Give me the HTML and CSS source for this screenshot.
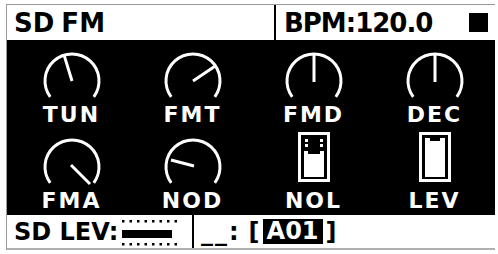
FILE: index.html
```html
<!DOCTYPE html>
<html>
<head>
<meta charset="utf-8">
<link rel="stylesheet" href="styles.css">
</head>
<body>
<div class="screen">
  <div class="hdr">
    <div class="title"><span class="sd">SD</span> FM</div>
    <div class="bpm"><span class="bpmtxt">BPM:120.0</span><span class="stop"></span></div>
  </div>
  <div class="main">
    <div class="cell">
      <svg class="icon" width="64" height="58" viewBox="0 0 64 58"><path class="arc" d="M10.2 50.9 A27 27 0 1 1 53.8 50.9"/><line class="ptr" x1="32" y1="35" x2="24.4" y2="10.1"/></svg>
      <div class="lbl">TUN</div>
    </div>
    <div class="cell">
      <svg class="icon" width="64" height="58" viewBox="0 0 64 58"><path class="arc" d="M10.2 50.9 A27 27 0 1 1 53.8 50.9"/><line class="ptr" x1="32" y1="35" x2="53.5" y2="20.5"/></svg>
      <div class="lbl">FMT</div>
    </div>
    <div class="cell">
      <svg class="icon" width="64" height="58" viewBox="0 0 64 58"><path class="arc" d="M10.2 50.9 A27 27 0 1 1 53.8 50.9"/><line class="ptr" x1="32" y1="36" x2="32" y2="8"/></svg>
      <div class="lbl">FMD</div>
    </div>
    <div class="cell">
      <svg class="icon" width="64" height="58" viewBox="0 0 64 58"><path class="arc" d="M10.2 50.9 A27 27 0 1 1 53.8 50.9"/><line class="ptr" x1="32" y1="36" x2="32" y2="8"/></svg>
      <div class="lbl">DEC</div>
    </div>
    <div class="cell">
      <svg class="icon" width="64" height="58" viewBox="0 0 64 58"><path class="arc" d="M10.2 50.9 A27 27 0 1 1 53.8 50.9"/><line class="ptr" x1="31" y1="33" x2="50" y2="52"/></svg>
      <div class="lbl">FMA</div>
    </div>
    <div class="cell">
      <svg class="icon" width="64" height="58" viewBox="0 0 64 58"><path class="arc" d="M10.2 50.9 A27 27 0 1 1 53.8 50.9"/><line class="ptr" x1="33" y1="34" x2="10" y2="28"/></svg>
      <div class="lbl">NOD</div>
    </div>
    <div class="cell">
      <svg class="icon" width="64" height="58" viewBox="0 0 64 58"><rect class="box" x="17.5" y="1.5" width="29" height="47"/><rect class="fill" x="23" y="7" width="3" height="3"/><rect class="fill" x="38" y="7" width="3" height="3"/><rect class="fill" x="23" y="12" width="3" height="3"/><rect class="fill" x="38" y="12" width="3" height="3"/><path class="fill" d="M22 19 h4 v3 h12 v-3 h4 v26 h-20 z"/></svg>
      <div class="lbl">NOL</div>
    </div>
    <div class="cell">
      <svg class="icon" width="64" height="58" viewBox="0 0 64 58"><rect class="box" x="17.5" y="1.5" width="29" height="47"/><path class="fill" d="M22 6 h5 v3 h10 v-3 h5 v39 h-20 z"/></svg>
      <div class="lbl">LEV</div>
    </div>
  </div>
  <div class="foot">
    <div class="lev">
      <span class="ftxt">SD LEV:</span>
      <svg class="meter" width="60" height="30" viewBox="0 0 60 30">
        <g class="dots">
          <rect x="1" y="3" width="2.5" height="2.5"/><rect x="8.5" y="3" width="2.5" height="2.5"/><rect x="16" y="3" width="2.5" height="2.5"/><rect x="23.5" y="3" width="2.5" height="2.5"/><rect x="31" y="3" width="2.5" height="2.5"/><rect x="38.5" y="3" width="2.5" height="2.5"/><rect x="46" y="3" width="2.5" height="2.5"/><rect x="53.5" y="3" width="2.5" height="2.5"/>
          <rect x="1" y="26" width="2.5" height="2.5"/><rect x="8.5" y="26" width="2.5" height="2.5"/><rect x="16" y="26" width="2.5" height="2.5"/><rect x="23.5" y="26" width="2.5" height="2.5"/><rect x="31" y="26" width="2.5" height="2.5"/><rect x="38.5" y="26" width="2.5" height="2.5"/><rect x="46" y="26" width="2.5" height="2.5"/><rect x="53.5" y="26" width="2.5" height="2.5"/>
        </g>
        <rect x="1" y="13" width="50" height="8"/>
      </svg>
    </div>
    <div class="src">
      <span class="dash">__</span><span class="ftxt">:</span>
      <span class="ftxt brk">[</span><span class="inv">A01</span><span class="ftxt">]</span>
    </div>
  </div>
</div>
</body>
</html>
```

FILE: styles.css
```css
html, body {
  margin: 0;
  padding: 0;
  background: #fff;
}

.screen {
  margin: 4px 0 0 6px;
  width: 488px;
  border-top: 1px solid #9a9a9a;
  border-left: 1px solid #9a9a9a;
  font-family: "DejaVu Sans", sans-serif;
  font-weight: bold;
  color: #000;
}

.hdr {
  display: flex;
  height: 35px;
  background: #fff;
}

.title {
  flex: 0 0 260px;
  padding-left: 7px;
  display: flex;
  align-items: center;
  font-size: 26px;
  white-space: pre;
  word-spacing: -2px;
}

.bpm {
  flex: 1;
  border-left: 2px solid #000;
  display: flex;
  align-items: center;
  padding-left: 8px;
  padding-right: 7px;
}

.bpmtxt {
  font-size: 26px;
  letter-spacing: -1px;
}

.stop {
  margin-left: auto;
  width: 19px;
  height: 19px;
  background: #000;
}

.main {
  background: #000;
  height: 175px;
  box-sizing: border-box;
  padding: 6px 0 0 4px;
  display: grid;
  grid-template-columns: repeat(4, 1fr);
  grid-template-rows: 86px 83px;
}

.cell {
  display: flex;
  flex-direction: column;
  align-items: center;
}

.icon {
  display: block;
}

.arc, .ptr {
  fill: none;
  stroke: #fff;
  stroke-width: 3;
}

.box {
  fill: none;
  stroke: #fff;
  stroke-width: 3;
}

.fill {
  fill: #fff;
}

.lbl {
  margin-top: 2px;
  color: #fff;
  font-size: 22px;
  line-height: 18px;
  letter-spacing: 2px;
}

.foot {
  display: flex;
  height: 33px;
  border-bottom: 2px solid #b0b0b0;
  background: #fff;
}

.lev {
  flex: 0 0 178px;
  padding-left: 7px;
  display: flex;
  align-items: center;
  border-right: 2px solid #000;
}

.ftxt {
  font-size: 24px;
}

.meter {
  display: block;
  margin-left: 3px;
  fill: #000;
}

.src {
  flex: 1;
  display: flex;
  align-items: center;
  padding-left: 7px;
}

.dash {
  font-size: 24px;
  letter-spacing: 2px;
  vertical-align: 5px;
  position: relative;
}

.brk {
  margin-left: 10px;
}

.inv {
  background: #000;
  color: #fff;
  font-size: 24px;
  line-height: 25px;
  padding: 0 4px;
  margin: 0 3px;
}
```
